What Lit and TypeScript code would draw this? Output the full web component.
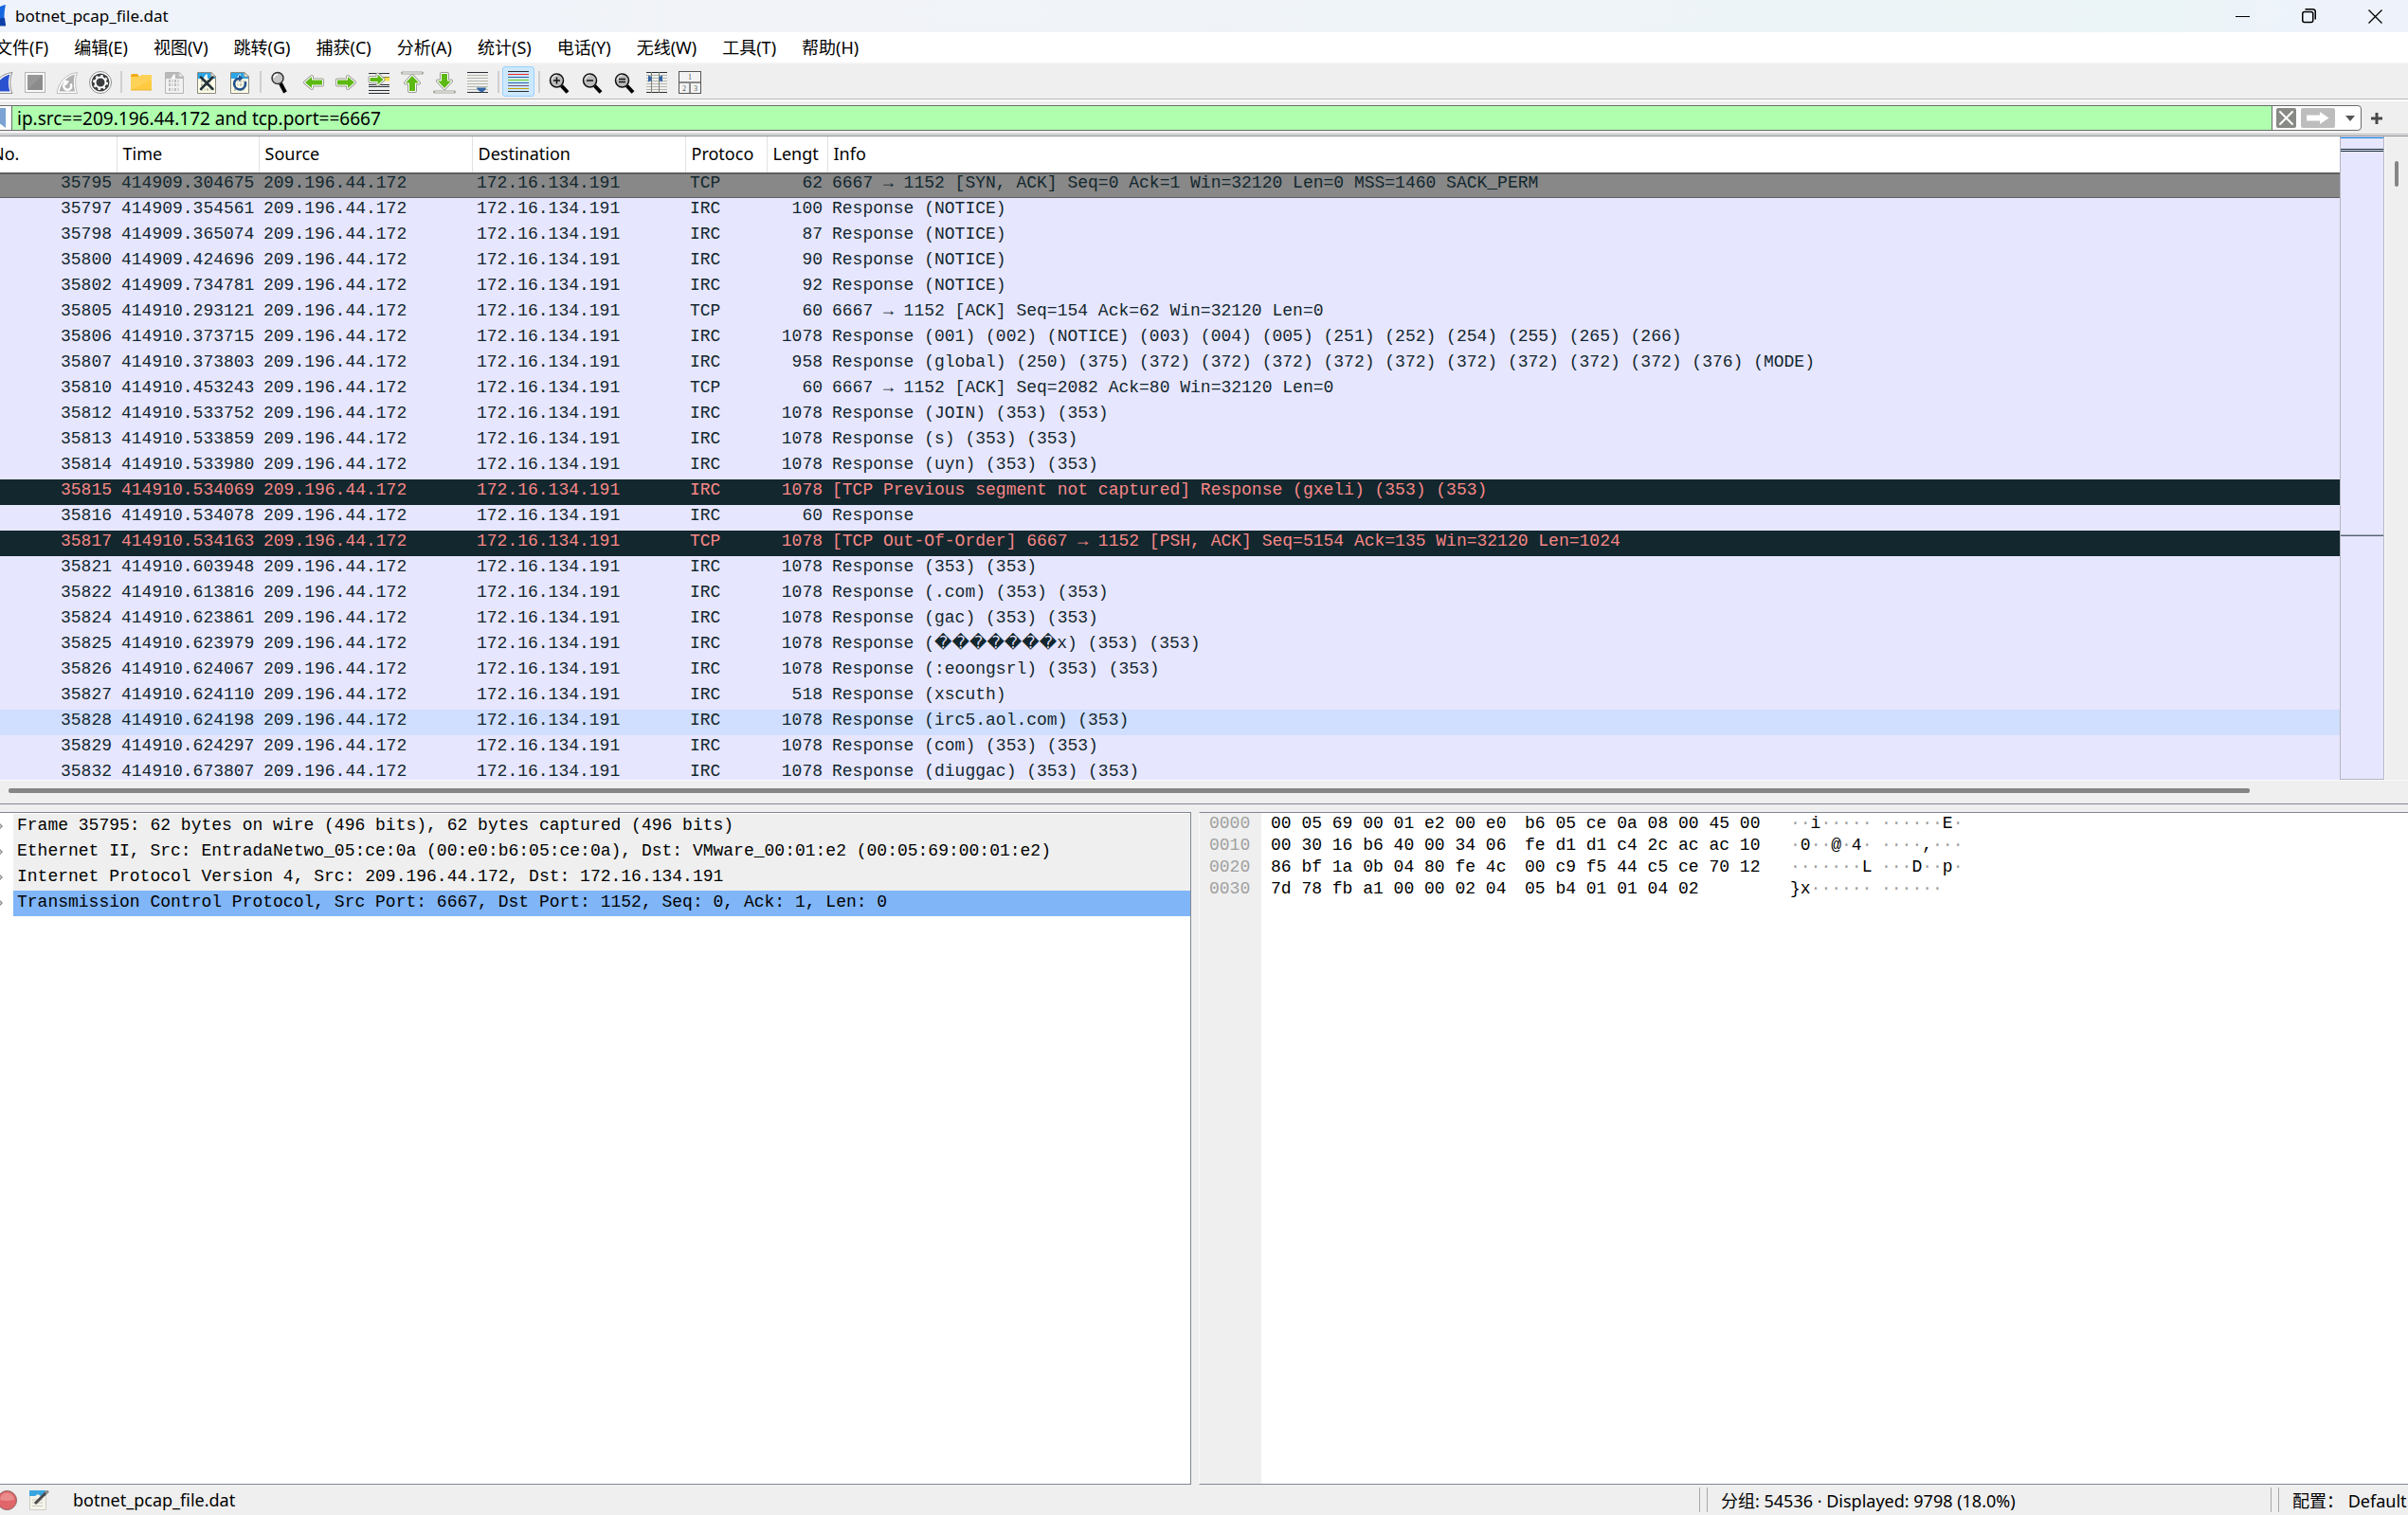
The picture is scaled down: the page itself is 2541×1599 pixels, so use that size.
import { LitElement, html, css, svg, nothing, type TemplateResult } from "lit";
import { customElement, state } from "lit/decorators.js";
import { classMap } from "lit/directives/class-map.js";

interface Packet {
  no: number;
  time: string;
  proto: string;
  len: number;
  info: string;
  kind?: "syn" | "bad" | "hover";
}

const p = (no: number, time: string, proto: string, len: number, info: string, kind?: Packet["kind"]): Packet => ({
  no,
  time,
  proto,
  len,
  info,
  kind,
});

const SOURCE = "209.196.44.172";
const DESTINATION = "172.16.134.191";

const PACKETS: Packet[] = [
  p(35795, "414909.304675", "TCP", 62, "6667 → 1152 [SYN, ACK] Seq=0 Ack=1 Win=32120 Len=0 MSS=1460 SACK_PERM", "syn"),
  p(35797, "414909.354561", "IRC", 100, "Response (NOTICE)"),
  p(35798, "414909.365074", "IRC", 87, "Response (NOTICE)"),
  p(35800, "414909.424696", "IRC", 90, "Response (NOTICE)"),
  p(35802, "414909.734781", "IRC", 92, "Response (NOTICE)"),
  p(35805, "414910.293121", "TCP", 60, "6667 → 1152 [ACK] Seq=154 Ack=62 Win=32120 Len=0"),
  p(35806, "414910.373715", "IRC", 1078, "Response (001) (002) (NOTICE) (003) (004) (005) (251) (252) (254) (255) (265) (266)"),
  p(35807, "414910.373803", "IRC", 958, "Response (global) (250) (375) (372) (372) (372) (372) (372) (372) (372) (372) (372) (376) (MODE)"),
  p(35810, "414910.453243", "TCP", 60, "6667 → 1152 [ACK] Seq=2082 Ack=80 Win=32120 Len=0"),
  p(35812, "414910.533752", "IRC", 1078, "Response (JOIN) (353) (353)"),
  p(35813, "414910.533859", "IRC", 1078, "Response (s) (353) (353)"),
  p(35814, "414910.533980", "IRC", 1078, "Response (uyn) (353) (353)"),
  p(35815, "414910.534069", "IRC", 1078, "[TCP Previous segment not captured] Response (gxeli) (353) (353)", "bad"),
  p(35816, "414910.534078", "IRC", 60, "Response"),
  p(35817, "414910.534163", "TCP", 1078, "[TCP Out-Of-Order] 6667 → 1152 [PSH, ACK] Seq=5154 Ack=135 Win=32120 Len=1024", "bad"),
  p(35821, "414910.603948", "IRC", 1078, "Response (353) (353)"),
  p(35822, "414910.613816", "IRC", 1078, "Response (.com) (353) (353)"),
  p(35824, "414910.623861", "IRC", 1078, "Response (gac) (353) (353)"),
  p(35825, "414910.623979", "IRC", 1078, "Response (\uFFFD\uFFFD\uFFFD\uFFFD\uFFFD\uFFFD\uFFFDx) (353) (353)"),
  p(35826, "414910.624067", "IRC", 1078, "Response (:eoongsrl) (353) (353)"),
  p(35827, "414910.624110", "IRC", 518, "Response (xscuth)"),
  p(35828, "414910.624198", "IRC", 1078, "Response (irc5.aol.com) (353)", "hover"),
  p(35829, "414910.624297", "IRC", 1078, "Response (com) (353) (353)"),
  p(35832, "414910.673807", "IRC", 1078, "Response (diuggac) (353) (353)"),
];

const MENUS = ["文件(F)", "编辑(E)", "视图(V)", "跳转(G)", "捕获(C)", "分析(A)", "统计(S)", "电话(Y)", "无线(W)", "工具(T)", "帮助(H)"];

const DETAILS = [
  "Frame 35795: 62 bytes on wire (496 bits), 62 bytes captured (496 bits)",
  "Ethernet II, Src: EntradaNetwo_05:ce:0a (00:e0:b6:05:ce:0a), Dst: VMware_00:01:e2 (00:05:69:00:01:e2)",
  "Internet Protocol Version 4, Src: 209.196.44.172, Dst: 172.16.134.191",
  "Transmission Control Protocol, Src Port: 6667, Dst Port: 1152, Seq: 0, Ack: 1, Len: 0",
];

const BYTES: string[][] = [
  ["0000", "00 05 69 00 01 e2 00 e0", "b6 05 ce 0a 08 00 45 00", "··i·····", "······E·"],
  ["0010", "00 30 16 b6 40 00 34 06", "fe d1 d1 c4 2c ac ac 10", "·0··@·4·", "····,···"],
  ["0020", "86 bf 1a 0b 04 80 fe 4c", "00 c9 f5 44 c5 ce 70 12", "·······L", "···D··p·"],
  ["0030", "7d 78 fb a1 00 00 02 04", "05 b4 01 01 04 02", "}x······", "······"],
];

const icon = (body: unknown, w = 24, h = 24) =>
  html`<svg width=${w} height=${h} viewBox="0 0 ${w} ${h}" fill="none" aria-hidden="true">${body}</svg>`;

const lines = (ys: number[], color: string, x1 = 1, x2 = 23) =>
  ys.map((y) => svg`<path d="M${x1} ${y}H${x2}" stroke=${color} stroke-width="1"/>`);

const greenArrow = (d: string) => svg`
  <path d=${d} fill="#fff" stroke="#9b9b96" stroke-width="4" stroke-linejoin="round"/>
  <path d=${d} fill="#62bd1c" stroke="#fff" stroke-width="2" stroke-linejoin="round"/>
  <path d=${d} fill="#5cb812"/>`;

const page = (on: boolean) => svg`
  <path d="M2.500 1.500H17l4.500 4.500V23.500H2.500Z" fill=${on ? "#fdfde8" : "#f1f1f1"} stroke=${on ? "#8a8a80" : "#b5b5b5"}/>
  <path d="M3 2H16.500V6H21V8H13L10.500 6.500L8 8H3Z" fill=${on ? "#2aa5e6" : "#b9b9b9"}/>
  <path d="M9 8C9.500 5.500 10.500 4 12.500 3L13 8Z" fill="#fff"/>
  <path d="M17 1.500V6H21.500Z" fill="#fff" stroke=${on ? "#8a8a80" : "#b5b5b5"}/>
  <path d="M6 10.500H18M6 14.500H18M6 19.500H18" stroke=${on ? "#c5c5b4" : "#bdbdbd"} stroke-width="3" stroke-dasharray="2 1.500 1 1.500"/>`;

const lens = (mark: unknown) => svg`
  <path d="M14.500 15.500L21 22.500" stroke="#000" stroke-width="4"/>
  <circle cx="9.500" cy="10" r="7" fill="#bcbcbc" stroke="#111" stroke-width="1.500"/>
  <path d="M4.500 9A5 5 0 0 1 9.500 4.500" stroke="#e4e4e4" stroke-width="1.500"/>
  ${mark}`;

const ICONS: Record<string, TemplateResult> = {
  start: icon(svg`<path d="M1 23.500C3 11 11 3 23 1.500C20 8 20 17 23 23.500Z" fill="#fff" stroke="#8d8d8d"/>
    <path d="M3.500 21.500C6 12 12 5.500 20.500 3.500C18.500 9 18.500 16 20.500 21.500Z" fill="#2a52d0"/>`),
  stop: icon(svg`<rect x="1.500" y="1.500" width="21" height="21" fill="#fafafa" stroke="#b4b4b4"/>
    <rect x="4" y="4" width="16" height="16" fill="#8b8b8b"/><path d="M4 4H20L4 20Z" fill="#979797"/>`),
  restart: icon(svg`<path d="M1 23.500C3 11 11 3 22.500 1.500C20 8 20 17 22.500 23.500Z" fill="#fff" stroke="#bdbdbd"/>
    <path d="M3.500 21.500C6 12 12 5.500 20 3.500C18.500 9 18.500 16 20 21.500Z" fill="#b1b1b1"/>
    <path d="M15.500 13.500A4 4 0 1 1 10 12.500" stroke="#fff" stroke-width="2.500"/><path d="M7.500 9.500L14 10.500L10.500 15.500Z" fill="#fff"/>`),
  options: icon(svg`<circle cx="12" cy="12" r="11.500" fill="#fff" stroke="#8f8f8f"/><circle cx="12" cy="12" r="9.500" fill="#3b3d3f"/>
    <circle cx="12" cy="12" r="5.500" stroke="#fff" stroke-width="2"/>
    <circle cx="12" cy="12" r="7" stroke="#fff" stroke-width="2" stroke-dasharray="2.500 3"/>
    <circle cx="12" cy="12" r="3.500" fill="#3b3d3f"/>`),
  open: icon(svg`<path d="M1 5Q1 3 3 3H8L10 6H1Z" fill="#f2ab16"/><path d="M1 6H10L12 4H23V20H1Z" fill="#ffd257"/>
    <path d="M1 20L23 9V20Z" fill="#ffca42"/><path d="M1 20H23" stroke="#edb32d"/>`),
  save: icon(page(false)),
  close: icon(svg`${page(true)}<path d="M6 6.500L18.500 19M18.500 6.500L6 19" stroke="#22313a" stroke-width="2.500" stroke-linecap="round"/>`),
  reload: icon(svg`${page(true)}<path d="M17.500 11A6 6 0 1 1 12 7.500" stroke="#23508f" stroke-width="2.500"/><path d="M11 4L15.500 7.500L11 11Z" fill="#23508f"/>`),
  find: icon(svg`<path d="M12 13L17 22.500" stroke="#000" stroke-width="4"/>
    <circle cx="9" cy="7.500" r="6" fill="#c6c6c6" stroke="#333" stroke-width="1.500"/><path d="M5 7A4 4 0 0 1 9 3.500" stroke="#fff" stroke-width="1.500"/>`),
  back: icon(greenArrow("M3 12L10 6V9.500H21V14.500H10V18Z")),
  forward: icon(greenArrow("M21 12L14 6V9.500H3V14.500H14V18Z")),
  goto: icon(svg`${lines([2.5, 6.5, 14.5, 16.5, 20.5, 23.5], "#2b2f33")}<path d="M16 8.500H23" stroke="#f7e04b" stroke-width="4"/>
    ${greenArrow("M16.500 9L10.500 3.500V7H2.500V11H10.500V14.500Z")}`),
  first: icon(svg`${greenArrow("M12 5L19 12.500H15V21H9V12.500H5Z")}<path d="M1.500 2H22.500" stroke="#a2a29c" stroke-width="3" stroke-linecap="round"/><path d="M2 2H22" stroke="#fff"/>`),
  last: icon(svg`${greenArrow("M12 18L19 10.500H15V3H9V10.500H5Z")}<path d="M1.500 22H22.500" stroke="#a2a29c" stroke-width="3" stroke-linecap="round"/><path d="M2 22H22" stroke="#fff"/>`),
  autoscroll: icon(svg`${lines([1.5, 22.5], "#2b2f33")}${lines([4.5, 7.5, 10.5, 13.5, 16.5, 19.5], "#b4b7aa")}
    <path d="M11 17.500H21Q21 20 16.500 22.500Q11 20 11 17.500Z" fill="#3465a4"/>`),
  colorize: icon(svg`${lines([1.5, 22.5], "#2b2f33")}
    ${["#ef2929", "#3465a4", "#73d216", "#3465a4", "#75507b", "#c4a000"].map(
      (c, i) => svg`<path d=${`M1 ${4.5 + i * 3}H23`} stroke=${c} stroke-width="1"/>`,
    )}`),
  zoomin: icon(lens(svg`<path d="M6 10H13M9.500 6.500V13.500" stroke="#111" stroke-width="1.500"/>`)),
  zoomout: icon(lens(svg`<path d="M6 10H13" stroke="#111" stroke-width="1.500"/>`)),
  zoomreset: icon(lens(svg`<path d="M6 8.500H13M6 11.500H13" stroke="#111" stroke-width="1.500"/>`)),
  columns: icon(svg`${lines([1.5, 22.5], "#2b2f33")}${lines([4.5, 7.5, 10.5, 13.5, 16.5, 19.5], "#b4b7aa")}
    <path d="M6.500 1V23M14.500 1V23" stroke="#7c7f78"/><path d="M3 4.500L6.500 6V10L3 11.500ZM18 4.500L14.500 6V10L18 11.500Z" fill="#3465a4"/>`),
  layout: icon(svg`<rect x="0.500" y="0.500" width="23" height="23" fill="#f3f3f3" stroke="#555" />
    <path d="M1 12H23M12 12V23" stroke="#8b8b8b" stroke-width="2"/>
    <text x="12" y="9" class="tiny">1</text><text x="6" y="20.500" class="tiny">2</text><text x="18" y="20.500" class="tiny">3</text>`),
};

const TOOLS: { name: string; label: string }[][] = [
  [
    { name: "start", label: "开始捕获" },
    { name: "stop", label: "停止捕获" },
    { name: "restart", label: "重新捕获" },
    { name: "options", label: "捕获选项" },
  ],
  [
    { name: "open", label: "打开" },
    { name: "save", label: "保存" },
    { name: "close", label: "关闭" },
    { name: "reload", label: "重新加载" },
  ],
  [
    { name: "find", label: "查找分组" },
    { name: "back", label: "上一分组" },
    { name: "forward", label: "下一分组" },
    { name: "goto", label: "转到分组" },
    { name: "first", label: "首个分组" },
    { name: "last", label: "最新分组" },
    { name: "autoscroll", label: "自动滚动" },
  ],
  [{ name: "colorize", label: "着色" }],
  [
    { name: "zoomin", label: "放大" },
    { name: "zoomout", label: "缩小" },
    { name: "zoomreset", label: "普通大小" },
    { name: "columns", label: "调整列宽" },
    { name: "layout", label: "布局" },
  ],
];

const reset = css`
  * {
    box-sizing: border-box;
  }
  button {
    font: inherit;
    color: inherit;
    border: 0;
    padding: 0;
    margin: 0;
    background: none;
    display: flex;
    align-items: center;
    justify-content: center;
  }
  svg {
    display: block;
    flex: none;
  }
  table {
    border-collapse: collapse;
    border-spacing: 0;
    table-layout: fixed;
    width: 100%;
  }
  th,
  td {
    padding: 0;
    text-align: left;
    font-weight: 400;
    white-space: pre;
  }
`;

@customElement("main-toolbar")
export class MainToolbar extends LitElement {
  static styles = [
    reset,
    css`
      :host {
        display: flex;
        height: 37px;
        padding-top: 1px;
        background: #efefef;
        border-bottom: 1px solid #b9b9b9;
      }
      .group {
        display: grid;
        grid-auto-flow: column;
        grid-auto-columns: 1fr;
      }
      .n1 {
        width: 34px;
      }
      .n4 {
        width: 138px;
      }
      .n5 {
        width: 172px;
      }
      .n7 {
        width: 242px;
      }
      .sep {
        width: 9px;
        display: flex;
        justify-content: center;
        padding: 6px 0;
      }
      .sep::before {
        content: "";
        width: 2px;
        background: #cfcfcf;
      }
      .active {
        margin: 1px 0 2px;
        border: 1px solid #99d1ff;
        border-radius: 3px;
        background: #cce8ff;
      }
      .tiny {
        font: 8px "Liberation Serif", serif;
        fill: #555;
        text-anchor: middle;
      }
    `,
  ];

  render() {
    return TOOLS.map(
      (group, i) => html`${i ? html`<span class="sep"></span>` : nothing}
        <div class="group n${group.length}">
          ${group.map(
            (t) => html`<button class=${classMap({ active: t.name === "colorize" })} aria-label=${t.label}>${ICONS[t.name]}</button>`,
          )}
        </div>`,
    );
  }
}

@customElement("packet-list")
export class PacketList extends LitElement {
  static styles = [
    reset,
    css`
      :host {
        display: grid;
        grid-template-columns: minmax(0, 1fr) 47px 25px;
        grid-template-rows: minmax(0, 1fr) 25px;
        border-top: 1px solid #828790;
        border-bottom: 1px solid #828790;
        background: #efefef;
        min-height: 0;
      }
      .rows {
        overflow: hidden;
        background: #fff;
      }
      .no {
        width: 138px;
      }
      .time {
        width: 150px;
      }
      .addr {
        width: 225px;
      }
      .proto {
        width: 86px;
      }
      .len {
        width: 64px;
      }
      th {
        height: 38px;
        padding: 0 6px 2px;
        border-right: 1px solid #e2e2e2;
        font-size: 18px;
        overflow: hidden;
        color: #000;
      }
      th:last-child {
        border-right: 0;
      }
      td {
        height: 27px;
        padding: 0 5px 4px;
        line-height: 23px;
        overflow: hidden;
        font-family: "Liberation Mono", "DejaVu Sans Mono", monospace;
        font-size: 18px;
        color: #12272e;
        background: #e7e6ff;
      }
      .num {
        text-align: right;
      }
      .unknown {
        font-family: "DejaVu Sans", sans-serif;
        line-height: 1;
      }
      .syn td {
        background: #888;
        box-shadow: inset 0 2px #606060, inset 0 -1px #606060;
      }
      .bad td {
        background: #12272e;
        color: #f78787;
      }
      .hover td {
        background: #d0deff;
      }
      .map {
        background: #e7e6ff;
        border: 1px solid #b5b5c2;
        border-top: 0;
      }
      .map svg {
        width: 100%;
        height: 100%;
      }
      .vbar {
        display: flex;
        justify-content: center;
        padding-top: 26px;
        border-left: 1px solid #fff;
      }
      .vthumb {
        width: 4px;
        height: 27px;
        border-radius: 2px;
        background: #858585;
      }
      .hbar {
        grid-column: 1 / -1;
        display: flex;
        align-items: center;
        padding: 0 167px 3px 24px;
        border-top: 1px solid #fafafa;
      }
      .hthumb {
        flex: 1;
        height: 5px;
        border-radius: 2px;
        background: #858585;
      }
    `,
  ];

  private info(text: string) {
    return text.split(/(\uFFFD+)/).map((s) => (s.startsWith("\uFFFD") ? html`<span class="unknown">${s}</span>` : s));
  }

  render() {
    return html`
      <div class="rows">
        <table>
          <colgroup>
            <col class="no" /><col class="time" /><col class="addr" /><col class="addr" /><col class="proto" /><col class="len" /><col />
          </colgroup>
          <thead>
            <tr>
              ${["No.", "Time", "Source", "Destination", "Protoco", "Lengt", "Info"].map((h) => html`<th scope="col">${h}</th>`)}
            </tr>
          </thead>
          <tbody>
            ${PACKETS.map(
              (r) => html`<tr class=${r.kind ?? "plain"}>
                <td class="num">${r.no}</td><td>${r.time}</td><td>${SOURCE}</td><td>${DESTINATION}</td><td>${r.proto}</td><td class="num">${r.len}</td><td>${this.info(r.info)}</td>
              </tr>`,
            )}
          </tbody>
        </table>
      </div>
      <div class="map">
        <svg preserveAspectRatio="none" viewBox="0 0 45 678" aria-hidden="true">
          <path d="M0 1.500H45" stroke="#0078d7" />
          <path d="M0 13.500H45M0 15.500H45M0 421.500H45" stroke="#12272e" />
        </svg>
      </div>
      <div class="vbar"><div class="vthumb"></div></div>
      <div class="hbar"><div class="hthumb"></div></div>
    `;
  }
}

@customElement("packet-details")
export class PacketDetails extends LitElement {
  @state() private selected = 3;

  static styles = [
    reset,
    css`
      :host {
        display: block;
        overflow: hidden;
        background: #fff;
        border: 1px solid #828790;
        padding-top: 1px;
        font-family: "Liberation Mono", "DejaVu Sans Mono", monospace;
        font-size: 18px;
        color: #000;
      }
      .row {
        width: 100%;
        height: 27px;
        justify-content: flex-start;
        white-space: pre;
      }
      .arrow {
        width: 28px;
        display: flex;
        justify-content: center;
      }
      .text {
        flex: 1;
        height: 27px;
        line-height: 25px;
        padding-left: 4px;
        text-align: left;
        background: #efefef;
      }
      .selected .text {
        background: #80b5f7;
      }
    `,
  ];

  render() {
    return DETAILS.map(
      (d, i) => html`<button class="row ${classMap({ selected: i === this.selected })}" @click=${() => (this.selected = i)}>
        <span class="arrow">${icon(svg`<path d="M1 1L4 4L1 7" stroke="#8a8a8a" stroke-width="1.500"/>`, 5, 8)}</span
        ><span class="text">${d}</span>
      </button>`,
    );
  }
}

@customElement("packet-bytes")
export class PacketBytes extends LitElement {
  static styles = [
    reset,
    css`
      :host {
        display: block;
        overflow: hidden;
        border-top: 1px solid #828790;
        border-bottom: 1px solid #828790;
        border-left: 1px solid #fafafa;
        background: linear-gradient(to right, #efefef 65px, #fff 65px);
        font-family: "Liberation Mono", "DejaVu Sans Mono", monospace;
        font-size: 18px;
      }
      .offset {
        width: 65px;
      }
      .low {
        width: 268px;
      }
      .high {
        width: 280px;
      }
      .ascii {
        width: 96px;
      }
      th,
      td {
        height: 23px;
        line-height: 23px;
        padding-left: 10px;
        color: #000;
      }
      th {
        color: #a0a0a0;
      }
      .dot {
        color: #a0a0a0;
      }
    `,
  ];

  private ascii(text: string) {
    return text.split(/(·+)/).map((s) => (s.startsWith("·") ? html`<span class="dot">${s}</span>` : s));
  }

  render() {
    return html`<table>
      <colgroup>
        <col class="offset" /><col class="low" /><col class="high" /><col class="ascii" /><col />
      </colgroup>
      <tbody>
        ${BYTES.map(
          ([off, a, b, c, d]) =>
            html`<tr><th scope="row">${off}</th><td>${a}</td><td>${b}</td><td>${this.ascii(c)}</td><td>${this.ascii(d)}</td></tr>`,
        )}
      </tbody>
    </table>`;
  }
}

@customElement("app-root")
export class AppRoot extends LitElement {
  static styles = [
    reset,
    css`
      :host {
        display: block;
        height: 100vh;
        overflow: hidden;
        background: #efefef;
        font-family: "Noto Sans", "Noto Sans CJK SC", sans-serif;
        font-size: 18px;
        color: #000;
      }
      /* The window hangs slightly past the left edge of the desktop. */
      .window {
        height: 100%;
        margin-left: -15px;
        display: flex;
        flex-direction: column;
      }
      .title {
        display: flex;
        align-items: center;
        height: 34px;
        font-size: 17px;
        background: linear-gradient(to right, #eff3fb, #f1f3f8 35%, #ebf4f6 90%, #eef3fb 96%);
      }
      .title h1 {
        flex: 1;
        margin: 0;
        padding-left: 9px;
        font-size: 17px;
        font-weight: 400;
        line-height: 34px;
      }
      .title button {
        width: 70px;
        height: 34px;
      }
      .menu {
        display: flex;
        gap: 7px;
        height: 34px;
        background: #fff;
        border-bottom: 2px solid #f4f4f4;
      }
      .menu button {
        padding: 0 10px 2px;
      }
      .filter {
        display: flex;
        height: 37px;
        padding: 4px 0 3px;
        border-top: 2px solid #fcfcfc;
        border-bottom: 1px solid #b9b9b9;
      }
      .box {
        flex: 1;
        display: flex;
        border: 1px solid #6b6b6b;
        border-radius: 4px;
        background: #fff;
        overflow: hidden;
      }
      .mark {
        width: 27px;
        border-right: 1px solid #6b6b6b;
      }
      .query {
        flex: 1;
        min-width: 0;
        border: 0;
        outline: 0;
        margin: 0;
        padding: 0 5px;
        background: #afffaf;
        font: inherit;
        font-size: 19px;
        color: #000;
      }
      .ends {
        display: flex;
        gap: 5px;
        padding-left: 4px;
        border-left: 1px solid #6b6b6b;
      }
      .drop {
        width: 22px;
      }
      .add {
        width: 49px;
        padding-right: 17px;
      }
      .panes {
        flex: 1;
        min-height: 0;
        padding-top: 1px;
        display: grid;
        grid-template-rows: minmax(0, 706fr) minmax(0, 711fr);
        row-gap: 8px;
      }
      .lower {
        display: grid;
        grid-template-columns: minmax(0, 1272fr) minmax(0, 1276fr);
        column-gap: 8px;
      }
      .status {
        display: flex;
        align-items: center;
        height: 32px;
        padding-left: 12px;
      }
      .status button {
        margin-right: 13px;
      }
      .file {
        flex: 1;
        padding-left: 11px;
      }
      .cell {
        display: flex;
        align-items: center;
        height: 26px;
        white-space: pre;
      }
      .cell::before {
        content: "";
        align-self: stretch;
        width: 7px;
        margin-right: 14px;
        border: solid #a8a8a8;
        border-width: 0 1px;
      }
      .count {
        width: 603px;
      }
      .profile {
        width: 145px;
      }
    `,
  ];

  render() {
    return html`<div class="window">
      <header class="title">
        ${icon(
          svg`<path d="M1 22C4 10 11 2 21 0C19 8 19 16 21 22Z" fill="#1668e0"/><path d="M3 22C8 16 14 14 20 14L21 22Z" fill="#0d3fa8"/><path d="M1 22.500H21" stroke="#8fa4cc"/>`,
          22,
          24,
        )}
        <h1>botnet_pcap_file.dat</h1>
        <button aria-label="最小化">${icon(svg`<path d="M0 7.500H15" stroke="#000"/>`, 15, 15)}</button>
        <button aria-label="还原">
          ${icon(
            svg`<rect x="0.750" y="3.500" width="11" height="11" rx="2" stroke="#000" stroke-width="1.500"/><path d="M3.500 0.750H11.500Q14.250 0.750 14.250 3.500V11.500" stroke="#000" stroke-width="1.500"/>`,
            15,
            16,
          )}
        </button>
        <button aria-label="关闭窗口">${icon(svg`<path d="M0.500 0.500L14.500 14.500M14.500 0.500L0.500 14.500" stroke="#000" stroke-width="1.300"/>`, 15, 15)}</button>
      </header>
      <nav class="menu">${MENUS.map((m) => html`<button>${m}</button>`)}</nav>
      <main-toolbar></main-toolbar>
      <div class="filter">
        <div class="box">
          <button class="mark" aria-label="书签">${icon(svg`<path d="M4 0H19V21L11 15L4 21Z" fill="#7ba3d3"/>`, 24, 21)}</button>
          <input class="query" aria-label="显示过滤器" spellcheck="false" .value=${"ip.src==209.196.44.172 and tcp.port==6667"} />
          <div class="ends">
            <button aria-label="清除">
              ${icon(
                svg`<rect width="21" height="21" rx="2" fill="#888a85"/><path d="M4 4L17 17M17 4L4 17" stroke="#fff" stroke-width="2" stroke-linecap="round"/>`,
                21,
                21,
              )}
            </button>
            <button aria-label="应用">
              ${icon(
                svg`<rect width="36" height="21" rx="2" fill="#bdbdbd"/><path d="M6 7.500H20V4L29.500 10.500L20 17V13.500H6Z" fill="#fff"/>`,
                36,
                21,
              )}
            </button>
            <button class="drop" aria-label="历史">${icon(svg`<path d="M0 0H10L5 6Z" fill="#555"/>`, 10, 6)}</button>
          </div>
        </div>
        <button class="add" aria-label="添加">${icon(svg`<path d="M6 0V12M0 6H12" stroke="#4a4a4a" stroke-width="3"/>`, 12, 12)}</button>
      </div>
      <main class="panes">
        <packet-list></packet-list>
        <div class="lower">
          <packet-details></packet-details>
          <packet-bytes></packet-bytes>
        </div>
      </main>
      <footer class="status">
        <button aria-label="专家信息">
          ${icon(
            svg`<circle cx="10.500" cy="10.500" r="10" fill="#e0666a" stroke="#8c5a5a"/><path d="M3 10A7.500 7.500 0 0 1 18 10Q10 12 3 10Z" fill="#ea8c8c"/>`,
            21,
            21,
          )}
        </button>
        <button aria-label="捕获文件注释">
          ${icon(
            svg`<path d="M0.500 0.500H17.500V20.500H0.500Z" fill="#f4f4ea" stroke="#cfcfc4"/><path d="M0 0H17V6H12L9 4L6 6H0Z" fill="#3aa6e0"/>
            <path d="M3 10H14M3 13H14M3 16.500H14" stroke="#c9c9bd"/><path d="M6 14L18 2" stroke="#4a4a4a" stroke-width="3"/><path d="M17 3L20 0.500" stroke="#8b8b8b" stroke-width="3"/>`,
            22,
            21,
          )}
        </button>
        <span class="file">botnet_pcap_file.dat</span>
        <span class="cell count">分组: 54536 · Displayed: 9798 (18.0%)</span>
        <span class="cell profile">配置： Default</span>
      </footer>
    </div>`;
  }
}
